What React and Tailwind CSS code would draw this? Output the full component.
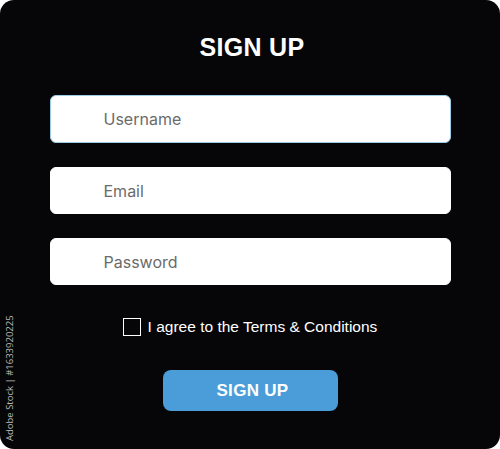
export default function App() {
  return (
    <div className="w-[500px] h-[449px] bg-white">
      <div className="relative w-full h-full bg-[#060608] rounded-[14px] flex flex-col items-center font-['Liberation_Sans',Arial,sans-serif]">
        <h1 className="mt-[33px] ml-[4px] text-white font-bold text-[25px] leading-[28px] tracking-[0.3px]">
          SIGN UP
        </h1>

        <div className="mt-[34px] w-[401px] flex flex-col gap-[24px] font-['Inter',sans-serif]">
          <input
            type="text"
            placeholder="Username"
            className="h-[48px] w-full rounded-[6px] bg-white border border-[#9ccbe6] pl-[53px] text-[16px] text-[#333] placeholder-[#6b6b6b] outline-none"
          />
          <input
            type="email"
            placeholder="Email"
            className="h-[47px] w-full rounded-[6px] bg-white border border-white pl-[53px] text-[16px] text-[#333] placeholder-[#6b6b6b] outline-none"
          />
          <input
            type="password"
            placeholder="Password"
            className="h-[47px] w-full rounded-[6px] bg-white border border-white pl-[53px] text-[16px] text-[#333] placeholder-[#6b6b6b] outline-none"
          />
        </div>

        <label className="mt-[33px] flex items-center gap-[7px] text-white text-[15.5px] leading-[18px] cursor-pointer">
          <span className="w-[18px] h-[18px] border-[1.5px] border-white inline-block"></span>
          I agree to the Terms &amp; Conditions
        </label>

        <button className="mt-[34px] w-[175px] h-[41px] rounded-[8px] bg-[#4a9dd8] text-white font-bold text-[17px] tracking-[0.3px] pl-[5px]">
          SIGN UP
        </button>

        <div className="absolute left-[4px] bottom-[8px] origin-bottom-left -rotate-90 translate-x-[12px] text-[9.5px] leading-[12px] text-[#b8b8b8] whitespace-nowrap font-['Open_Sans',sans-serif]">
          Adobe Stock | #1633920225
        </div>
      </div>
    </div>
  );
}
